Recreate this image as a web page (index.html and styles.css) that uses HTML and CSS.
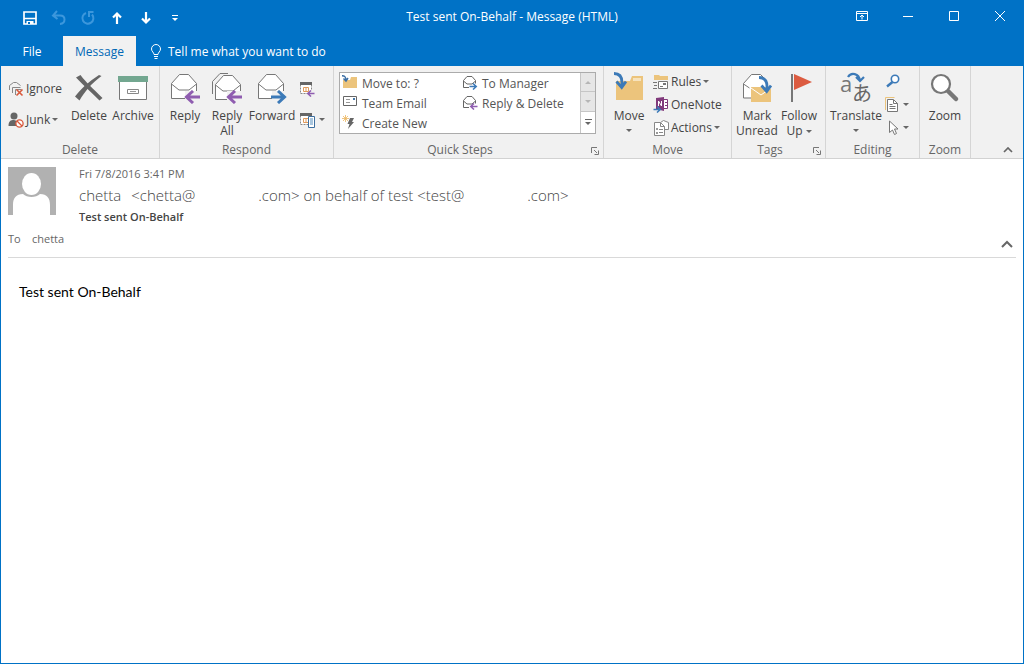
FILE: index.html
```html
<!DOCTYPE html>
<html lang="en">
<head>
<meta charset="utf-8">
<title>Test sent On-Behalf - Message (HTML)</title>
<link rel="stylesheet" href="styles.css">
</head>
<body>
<svg class="defs" aria-hidden="true">
  <symbol id="envelope" viewBox="0 0 32 32">
    <path d="M2.500 11.500L10.500 2.500h9L27.500 11.500V26.500h-25z" fill="#fff" stroke="#777"/>
    <path d="M2.500 12l7.500 6h10l7.500-6" fill="none" stroke="#777"/>
  </symbol>
  <symbol id="arrow-left" viewBox="0 0 18 14">
    <path d="M17 7H3M10 1L3.500 7l6.500 6" fill="none" stroke="currentColor" stroke-width="3"/>
  </symbol>
  <symbol id="arrow-right" viewBox="0 0 18 14">
    <path d="M1 7h14M8 1l6.500 6L8 13" fill="none" stroke="currentColor" stroke-width="3"/>
  </symbol>
  <symbol id="swoop" viewBox="0 0 14 18">
    <path d="M1 1.500c5 0 8 3 8 9V15M3.500 9.500L8.700 15.500 13 9.500" fill="none" stroke="#3c7ab8" stroke-width="2.800"/>
  </symbol>
  <symbol id="calendar" viewBox="0 0 16 16">
    <path d="M1.500 2.500h11v10h-11z" fill="#fff" stroke="#888" stroke-dasharray="2 1"/>
    <path d="M1 1h12v3H1z" fill="#666"/>
    <path d="M4.500 6.500h5v4h-5zM7 6.500v4" fill="none" stroke="#e09a5c"/>
  </symbol>
  <symbol id="open-mail" viewBox="0 0 16 16">
    <path d="M1.500 12.500V5.500L5 1.500h5l3.500 4v3M1.500 12.500H7M1.500 6L5 9h5l3.500-3" fill="none" stroke="#666"/>
  </symbol>
</svg>
<div class="window">
  <header class="titlebar">
    <div class="quick-access">
      <button aria-label="Save"><svg width="16" height="16"><path d="M2 2h12v12H2zM2 8.500h12" fill="none" stroke="#fff" stroke-width="1.700"/><path d="M4.500 11h7v3h-7z" fill="#fff"/><path d="M6 12h2v2H6z" fill="#0072c6"/></svg></button>
      <button aria-label="Undo"><svg class="dim" width="16" height="16"><path d="M6 1L2 5.500 6.500 9M2.500 5.500H9c6 0 6 8 0 8.500" fill="none" stroke="currentColor" stroke-width="2"/></svg></button>
      <button aria-label="Redo"><svg class="dim" width="16" height="16"><path d="M12 4.500a5.500 5.500 0 1 1-6-1.500M13.500 2h-4.500v5" fill="none" stroke="currentColor" stroke-width="2"/></svg></button>
      <button aria-label="Previous item"><svg width="16" height="16"><path d="M8 14V4M4 7.500l4-4 4 4" fill="none" stroke="#fff" stroke-width="2.200"/></svg></button>
      <button aria-label="Next item"><svg width="16" height="16"><path d="M8 2v10M4 8.500l4 4 4-4" fill="none" stroke="#fff" stroke-width="2.200"/></svg></button>
      <button aria-label="Customize toolbar"><svg width="16" height="16"><path d="M5 5.500h6" stroke="#fff"/><path d="M5 8h6l-3 3z" fill="#fff"/></svg></button>
    </div>
    <h1 class="title">Test sent On-Behalf - Message (HTML)</h1>
    <div class="window-controls">
      <button aria-label="Ribbon display options"><svg width="14" height="12"><path d="M1.500 1.500h11v9h-11zM1.500 3.500h11M7 9.500V5M5 7l2-2 2 2" fill="none" stroke="#fff"/></svg></button>
      <button aria-label="Minimize"><svg width="12" height="12"><path d="M1 6.500h10" stroke="#fff"/></svg></button>
      <button aria-label="Maximize"><svg width="12" height="12"><path d="M1.500 1.500h9v9h-9z" fill="none" stroke="#fff"/></svg></button>
      <button aria-label="Close"><svg width="12" height="12"><path d="M1 1l10 10M11 1L1 11" stroke="#fff"/></svg></button>
    </div>
  </header>
  <nav class="tabs">
    <button class="tab file">File</button>
    <button class="tab active">Message</button>
    <button class="tell-me"><svg width="12" height="16"><path d="M4 11.500c0-2-2.500-3-2.500-5.500a4.500 4.500 0 0 1 9 0C10.500 8.500 8 9.500 8 11.500zM4 13.500h4M4.500 15.500h3" fill="none" stroke="#fff"/></svg>Tell me what you want to do</button>
  </nav>

  <div class="ribbon">
    <section class="group g-delete">
      <div class="tools">
        <div class="stack two">
          <button class="small"><svg width="16" height="16"><path d="M1.500 9V4.500l4-3h3l4 3M4.500 12V6.500h8M7.500 14V8.500h6" fill="none" stroke="#888"/><path d="M8.500 8.500l6 6M14.500 8.500l-6 6" stroke="#d9583b" stroke-width="1.600"/></svg>Ignore</button>
          <button class="small"><svg width="16" height="16"><circle cx="6" cy="4" r="3.500" fill="#666"/><path d="M.5 14c0-5 2-6 5.500-6l3 1-1 5z" fill="#666"/><circle cx="11.500" cy="11.500" r="3.600" fill="#fff" stroke="#d9583b" stroke-width="1.300"/><path d="M9 9l5 5" stroke="#d9583b" stroke-width="1.300"/></svg>Junk<i class="caret"></i></button>
        </div>
        <button class="big w44"><svg width="32" height="32"><path d="M3 5.500L7.500 3c6 8 12 13 22 23l-3 2.500C18 20 11 14 3 5.500z" fill="#666"/><path d="M28.500 4L26 3C15 10 8 17 2 24.500l4.500 4C12 19 19 11 28.500 4z" fill="#666"/></svg>Delete</button>
        <button class="big w44"><svg width="32" height="32"><path d="M2.500 9h27v18.500h-27z" fill="#fff" stroke="#777"/><path d="M1 4h30v6H1z" fill="#73a790"/><path d="M10.500 17.500h11v4h-11z" fill="#fff" stroke="#888"/><path d="M13 19.500h6" stroke="#999"/></svg>Archive</button>
      </div>
      <h2>Delete</h2>
    </section>

    <section class="group g-respond">
      <div class="tools">
        <button class="big w42"><svg width="32" height="32"><use href="#envelope" width="32" height="32"/><path d="M16 19h13v11H16z" fill="#f1f1f1"/><use class="purple" href="#arrow-left" x="14" y="18" width="18" height="14"/></svg>Reply</button>
        <button class="big w42"><svg width="32" height="32"><path d="M1.500 22V9.500L9 1.500h8" fill="none" stroke="#777"/><use href="#envelope" x="2" y="1" width="32" height="32"/><path d="M16 19h16v11H16z" fill="#f1f1f1"/><use class="purple" href="#arrow-left" x="14" y="18" width="18" height="14"/></svg>Reply<br>All</button>
        <button class="big w48"><svg width="32" height="32"><use href="#envelope" width="32" height="32"/><path d="M16 19h13v11H16z" fill="#f1f1f1"/><use class="blue" href="#arrow-right" x="14" y="18" width="18" height="14"/></svg>Forward</button>
        <div class="stack two">
          <button class="small" aria-label="Meeting"><svg width="18" height="16"><use href="#calendar" width="16" height="16"/><path d="M10 9h6v6h-6z" fill="#f1f1f1"/><use class="purple" href="#arrow-left" x="7" y="9" width="9" height="7"/></svg></button>
          <button class="small" aria-label="More"><svg width="18" height="16"><use href="#calendar" width="16" height="16"/><path d="M9.500 4.500h6v11h-6z" fill="#fff" stroke="#3d6f9f"/><path d="M11 6h3v7h-3z" fill="#a9c6de"/></svg><i class="caret"></i></button>
        </div>
      </div>
      <h2>Respond</h2>
    </section>

    <section class="group g-steps">
      <div class="tools">
        <div class="gallery">
          <div class="steps">
            <button class="step"><svg width="16" height="16"><path d="M1 5h7l1-3h6v11H1z" fill="#ecc47c"/><path d="M0 .7c3 0 4 1 4 5M1.500 3.500l2.500 2.500 2-3" fill="none" stroke="#3c6fa5" stroke-width="1.500"/></svg>Move to: ?</button>
            <button class="step"><svg width="16" height="16"><use href="#open-mail" width="16" height="16"/><use class="blue" href="#arrow-right" x="7" y="8" width="9" height="7"/></svg>To Manager</button>
            <button class="step"><svg width="16" height="16"><path d="M1.500 1.500h13v9h-13z" fill="#fff" stroke="#666"/><path d="M4 4.500h4M4 7.500h4" stroke="#999"/><path d="M11 3h2v2h-2z" fill="#4577a8"/></svg>Team Email</button>
            <button class="step"><svg width="16" height="16"><use href="#open-mail" width="16" height="16"/><use class="purple" href="#arrow-left" x="7" y="8" width="9" height="7"/></svg>Reply &amp; Delete</button>
            <button class="step"><svg width="16" height="16"><path d="M3.500 0v7M0 3.500h7M1 1l5 5M6 1L1 6" stroke="#ecb65f" stroke-width=".8"/><path d="M8 3h4l-2 4h2L6 14l1.500-5H5.500z" fill="#666"/></svg>Create New</button>
          </div>
          <div class="scroller">
            <button disabled aria-label="Scroll up"><i class="caret up"></i></button>
            <button disabled aria-label="Scroll down"><i class="caret"></i></button>
            <button class="more" aria-label="More quick steps"><i class="caret"></i></button>
          </div>
        </div>
      </div>
      <h2>Quick Steps</h2>
      <button class="launcher" aria-label="Quick Steps settings"><svg width="8" height="8"><path d="M.5 6V.5H6M3 3l3 3M7.500 3.500v4h-4" fill="none" stroke="#777"/></svg></button>
    </section>

    <section class="group g-move">
      <div class="tools">
        <button class="big w42"><svg width="32" height="32"><path d="M3 9h14l2-5h11v24H3z" fill="#ecc47c"/><path d="M20 6h8v3h-8z" fill="#f7e3bd"/><use href="#swoop" width="14" height="18"/></svg>Move<i class="caret"></i></button>
        <div class="stack three">
          <button class="small"><svg width="16" height="16"><path d="M1 4V1h5l1 1h8v4H1z" fill="#ecc47c"/><path d="M5.500 7.500h9v7h-9z" fill="#fff" stroke="#777"/><path d="M7 12.500h3M0 8.500h4M1 11.500h3M0 14.500h4" stroke="#777"/><path d="M10 9h3v2h-3z" fill="#777"/></svg>Rules<i class="caret"></i></button>
          <button class="small"><svg width="16" height="16"><path d="M10.500 2.500h4v9h-4M12 5.500h2M12 8.500h2" fill="#fff" stroke="#80397b"/><path d="M3 1l8-1v14l-8-2z" fill="#80397b"/><path d="M5.500 9V4l3 5V4" fill="none" stroke="#fff"/><use class="blue" href="#arrow-right" y="9" width="9" height="7"/></svg>OneNote</button>
          <button class="small"><svg width="16" height="16"><path d="M7.500 4V2.500l3-2 5 2v7H12" fill="#fff" stroke="#888"/><path d="M1.500 2.500h6l4 4v9h-10z" fill="#fff" stroke="#888"/><path d="M7.500 3v3.500h4M6 9.500h4M6 12.500h4" fill="none" stroke="#888"/><path d="M3 8h2v2H3zM3 12h2v2H3z" fill="#999"/></svg>Actions<i class="caret"></i></button>
        </div>
      </div>
      <h2>Move</h2>
    </section>

    <section class="group g-tags">
      <div class="tools">
        <button class="big w42"><svg width="32" height="32"><path d="M2.500 11.500L10.500 2.500h9l6 7v16h-23z" fill="#fff"/><path d="M10 26H2.500V11.500L10.500 2.500h9l5 5M2.500 12l6 4" fill="none" stroke="#777"/><path d="M10 15h20v15H10z" fill="#ecc47c"/><path d="M10 16l10 7 10-7" fill="none" stroke="#fff"/><use href="#swoop" x="17" y="4" width="14" height="18"/></svg>Mark<br>Unread</button>
        <button class="big w42"><svg width="32" height="32"><path d="M8 2h2v28H8z" fill="#777"/><path d="M11 2l18 8-18 8z" fill="#dc5c41"/></svg>Follow<br><span>Up<i class="caret"></i></span></button>
      </div>
      <h2>Tags</h2>
      <button class="launcher" aria-label="Tags settings"><svg width="8" height="8"><path d="M.5 6V.5H6M3 3l3 3M7.500 3.500v4h-4" fill="none" stroke="#777"/></svg></button>
    </section>

    <section class="group g-editing">
      <div class="tools">
        <button class="big w52"><svg class="glyphs" width="32" height="32"><text class="latin" x="0" y="20">a</text><text class="kana" x="12" y="29">あ</text><path d="M8 5c3-5 11-4 12 4M16 5l4 4 4-4" fill="none" stroke="#3c7ab8" stroke-width="2.200"/></svg>Translate<i class="caret"></i></button>
        <div class="stack three">
          <button class="small" aria-label="Find"><svg width="16" height="16"><circle cx="10" cy="5" r="3.700" fill="#fff" stroke="#3c7ab8" stroke-width="1.600"/><path d="M7.500 8L2 12.500" stroke="#3c7ab8" stroke-width="2.400"/></svg></button>
          <button class="small" aria-label="Related"><svg width="16" height="16"><path d="M.5 13V.5h9" fill="none" stroke="#ecc47c"/><path d="M2.500 2.500h6l4 4v8h-10z" fill="#fff" stroke="#777"/><path d="M8.500 3v3.500h4M4.500 7.500h3M4.500 9.500h6M4.500 11.500h6" fill="none" stroke="#777"/></svg><i class="caret"></i></button>
          <button class="small" aria-label="Select"><svg width="16" height="16"><path d="M4.500 1v11.500l3-2.500 2 4.500 2-1-2-4.500h3.500z" fill="#fff" stroke="#777"/></svg><i class="caret"></i></button>
        </div>
      </div>
      <h2>Editing</h2>
    </section>

    <section class="group g-zoom">
      <div class="tools">
        <button class="big w42"><svg width="32" height="32"><path d="M18 18l9 9" stroke="#777" stroke-width="4.500" stroke-linecap="round"/><circle cx="12" cy="12" r="9" fill="#fff" stroke="#777" stroke-width="2.200"/></svg>Zoom</button>
      </div>
      <h2>Zoom</h2>
    </section>
    <button class="collapse" aria-label="Collapse ribbon"><svg width="10" height="6"><path d="M1 5l4-4 4 4" fill="none" stroke="#666" stroke-width="1.700"/></svg></button>
  </div>

  <main class="message">
    <header class="message-head">
      <svg class="avatar" width="48" height="48"><path d="M0 0h48v48H0z" fill="#b1b1b1"/><path d="M5 48V38c0-7 3-11 10-11 4 4 13 4 17 0 7 0 10 4 10 11v10z" fill="#fff"/><ellipse cx="23.500" cy="17" rx="9.500" ry="11" fill="#fff"/></svg>
      <div class="meta">
        <time>Fri 7/8/2016 3:41 PM</time>
        <p class="sender"><span>chetta</span><span class="address">&lt;chetta@</span><span class="domain">.com&gt; on behalf of test &lt;test@</span><span class="domain">.com&gt;</span></p>
        <p class="subject">Test sent On-Behalf</p>
      </div>
      <p class="recipients"><span class="to">To</span><span>chetta</span></p>
      <button class="fold" aria-label="Collapse header"><svg width="12" height="8"><path d="M1 7l5-5 5 5" fill="none" stroke="#666" stroke-width="2"/></svg></button>
    </header>
    <article class="body">Test sent On-Behalf</article>
  </main>
</div>
</body>
</html>
```

FILE: styles.css
```css
* {
  box-sizing: border-box;
  margin: 0;
}

body {
  font: 12px/15px "Open Sans", "Noto Sans", sans-serif;
  color: #444;
}

button {
  display: flex;
  align-items: center;
  border: 0;
  padding: 0;
  background: none;
  color: inherit;
  font: inherit;
  white-space: nowrap;
}

svg {
  flex: none;
  display: block;
}

.defs {
  position: absolute;
  width: 0;
  height: 0;
}

.window {
  display: flex;
  flex-direction: column;
  min-height: 100vh;
  border: 1px solid #0072c6;
  border-top: 0;
  background: #fff;
}

/* Title bar */
.titlebar {
  display: grid;
  grid-template-columns: 1fr auto 1fr;
  align-items: center;
  height: 36px;
  background: #0072c6;
  color: #fff;
}

.quick-access {
  display: flex;
  padding-left: 14px;
}

.quick-access button {
  width: 29px;
  height: 34px;
  justify-content: center;
}

.dim {
  color: #3c97dc;
}

.title {
  font-size: 12px;
  font-weight: 400;
  padding-bottom: 3px;
}

.window-controls {
  display: flex;
  justify-content: flex-end;
}

.window-controls button {
  width: 46px;
  height: 36px;
  padding-bottom: 4px;
  justify-content: center;
}

/* Tabs */
.tabs {
  display: flex;
  height: 30px;
  background: #0072c6;
  color: #fff;
}

.tab {
  justify-content: center;
  width: 73px;
}

.tab.file {
  width: 62px;
}

.tab.active {
  background: #f1f1f1;
  color: #0068b5;
}

.tell-me {
  gap: 6px;
  padding-left: 14px;
}

/* Ribbon */
.ribbon {
  display: flex;
  border-bottom: 1px solid #d2d2d2;
  background: #f1f1f1;
}

.group {
  position: relative;
  display: grid;
  grid-template-rows: 76px 16px;
  border-right: 1px solid #d5d5d5;
}

.group h2 {
  font-size: 12px;
  font-weight: 400;
  text-align: center;
  color: #666;
}

.g-delete { width: 159px; }
.g-respond { width: 174px; }
.g-steps { width: 270px; }
.g-move { width: 128px; }
.g-tags { width: 94px; }
.g-editing { width: 94px; }
.g-zoom { width: 51px; }

.g-steps h2,
.g-tags h2 {
  padding-right: 17px;
}

.tools {
  display: flex;
  align-items: flex-start;
  padding: 4px 0 0 4px;
}

.g-delete .tools {
  padding-left: 7px;
}

.big {
  flex: none;
  flex-direction: column;
  padding-top: 2px;
}

.big > svg {
  margin-bottom: 4px;
}

.big > .caret {
  margin: 6px 0 0;
}

.w42 { width: 42px; }
.w44 { width: 44px; }
.w48 { width: 48px; }
.w52 { width: 52px; }

.stack {
  display: grid;
}

.stack.two {
  grid-auto-rows: 31px;
  padding-top: 3px;
}

.stack.three {
  grid-auto-rows: 23px;
}

.g-delete .stack {
  width: 59px;
}

.small {
  gap: 2px;
}

.caret {
  display: inline-block;
  border: 3px solid transparent;
  border-top-color: #666;
  border-bottom: 0;
  margin-left: 3px;
  vertical-align: middle;
}

.small .caret {
  margin-left: 0;
}

.caret.up {
  transform: rotate(180deg);
}

.purple { color: #8f5db0; }
.blue { color: #3c7ab8; }

.glyphs {
  overflow: visible;
}

.latin {
  font: 22px "Open Sans", sans-serif;
  fill: #777;
}

.kana {
  font: 20px "Noto Sans CJK JP", sans-serif;
  fill: #666;
}

.g-respond .stack,
.g-move .stack,
.g-editing .stack {
  padding-left: 3px;
}

.launcher {
  position: absolute;
  right: 4px;
  bottom: 3px;
}

/* Quick steps gallery */
.g-steps .tools {
  padding: 6px 7px 8px 5px;
}

.gallery {
  display: flex;
  flex: 1;
  height: 62px;
  border: 1px solid #ababab;
  background: #fff;
}

.steps {
  display: grid;
  flex: 1;
  grid-template-columns: 120px 1fr;
  grid-auto-rows: 20px;
  padding-left: 2px;
}

.step {
  gap: 4px;
  color: #555;
}

.scroller {
  display: grid;
  width: 15px;
  border-left: 1px solid #c6c6c6;
}

.scroller button {
  justify-content: center;
  background: #e6e6e6;
  border-bottom: 1px solid #c6c6c6;
}

.scroller .caret {
  margin: 0;
  border-top-color: #b5b5b5;
}

.scroller .more {
  flex-direction: column;
  gap: 2px;
  background: #fff;
  border: 0;
}

.more::before {
  content: "";
  width: 7px;
  border-top: 1px solid #666;
}

.scroller .more .caret {
  border-top-color: #666;
}

.collapse {
  align-self: flex-end;
  margin-left: auto;
  padding: 5px 10px;
}

/* Message */
.message {
  padding: 8px 7px;
}

.message-head {
  display: grid;
  grid-template-columns: 71px 1fr auto;
  border-bottom: 1px solid #d9d9d9;
  padding-bottom: 9px;
  color: #666;
}

.meta {
  grid-column: 2 / 4;
}

.meta time {
  display: block;
  font-size: 11px;
  line-height: 14px;
}

.sender {
  display: flex;
  font-size: 15px;
  font-weight: 300;
  line-height: 28px;
  white-space: nowrap;
  color: #444;
}

.address {
  padding-left: 10px;
}

.domain {
  padding-left: 63px;
}

.subject {
  font-weight: 600;
  font-size: 11px;
  line-height: 16px;
  color: #444;
}

.recipients {
  grid-column: 1 / 3;
  padding: 6px 0 2px;
  font-size: 11px;
}

.to {
  display: inline-block;
  width: 24px;
}

.fold {
  align-self: end;
  padding: 0 3px;
}

.body {
  padding: 25px 11px;
  font: 14px/18px Lato, "Open Sans", sans-serif;
  color: #000;
}
```
